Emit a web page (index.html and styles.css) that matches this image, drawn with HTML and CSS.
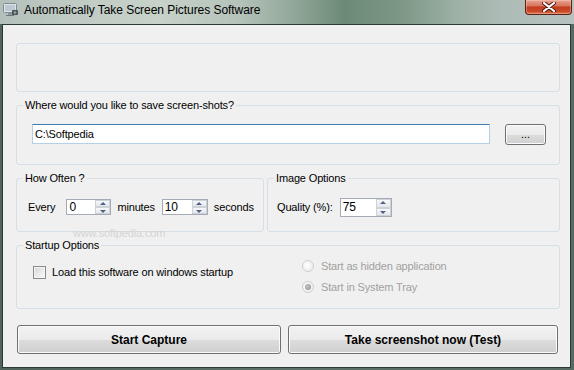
FILE: index.html
```html
<!DOCTYPE html>
<html lang="en">
  <head>
    <meta charset="UTF-8" />
    <title>Automatically Take Screen Pictures Software</title>
    <link rel="stylesheet" href="styles.css">
  </head>
  <body>
    <div class="window">
      <div class="titlebar">
        <svg class="app-icon" width="15" height="13" viewBox="0 0 15 13">
          <rect x="0.5" y="0.5" width="13" height="9" rx="1" fill="#dfe4e6" stroke="#7d8a8e" />
          <rect x="2" y="2" width="10" height="6" fill="#b9c8d2" />
          <rect x="5" y="10" width="4" height="2" fill="#8c979a" />
          <rect x="3" y="12" width="8" height="1" fill="#6f7a7d" />
          <rect x="9" y="7" width="6" height="5" rx="1" fill="#4b5457" />
          <circle cx="12" cy="9.5" r="1.3" fill="#9aa6ab" />
        </svg>
        <span class="title">Automatically Take Screen Pictures Software</span>
        <div class="close-btn">
          <svg width="14" height="10" viewBox="0 0 14 10">
            <path d="M2 1 L12 9 M12 1 L2 9" stroke="#4a1a10" stroke-width="4" stroke-linecap="round" />
            <path d="M2 1 L12 9 M12 1 L2 9" stroke="#ffffff" stroke-width="2.2" stroke-linecap="round" />
          </svg>
        </div>
      </div>

      <div class="client">
        <div class="group group-empty"></div>

        <div class="group group-path">
          <span class="legend">Where would you like to save screen-shots?</span>
          <div class="textbox">C:\Softpedia</div>
          <button class="btn btn-browse">...</button>
        </div>

        <div class="options-row">
          <div class="group group-often">
            <span class="legend">How Often ?</span>
            <span class="label">Every</span>
            <div class="spinner spin-minutes">
              <span class="spin-value">0</span>
              <div class="spin-buttons">
                <div class="spin-btn up"></div>
                <div class="spin-btn down"></div>
              </div>
            </div>
            <span class="label label-minutes">minutes</span>
            <div class="spinner spin-seconds">
              <span class="spin-value">10</span>
              <div class="spin-buttons">
                <div class="spin-btn up"></div>
                <div class="spin-btn down"></div>
              </div>
            </div>
            <span class="label label-seconds">seconds</span>
          </div>

          <div class="group group-image">
            <span class="legend">Image Options</span>
            <span class="label">Quality (%):</span>
            <div class="spinner spin-quality">
              <span class="spin-value">75</span>
              <div class="spin-buttons">
                <div class="spin-btn up"></div>
                <div class="spin-btn down"></div>
              </div>
            </div>
          </div>
        </div>

        <div class="group group-startup">
          <span class="legend">Startup Options</span>
          <div class="check-row">
            <span class="checkbox"></span>
            <span class="label">Load this software on windows startup</span>
          </div>
          <div class="radio-list">
            <div class="radio-row">
              <span class="radio"></span>
              <span class="label disabled">Start as hidden application</span>
            </div>
            <div class="radio-row">
              <span class="radio checked"></span>
              <span class="label disabled">Start in System Tray</span>
            </div>
          </div>
        </div>

        <div class="actions">
          <button class="btn btn-main btn-start">Start Capture</button>
          <button class="btn btn-main btn-test">Take screenshot now (Test)</button>
        </div>

        <span class="watermark">www.softpedia.com</span>
      </div>
    </div>
  </body>
</html>
```

FILE: styles.css
```css
body {
  margin: 0;
  overflow: hidden;
  font-family: "Liberation Sans", Arial, sans-serif;
  font-size: 11px;
  letter-spacing: -0.15px;
  color: #000;
}
.window {
  width: 574px;
  height: 370px;
  display: flex;
  flex-direction: column;
  background: linear-gradient(90deg, #4f645a 0%, #5d7268 50%, #566b62 100%);
}
.titlebar {
  height: 24px;
  display: flex;
  align-items: flex-start;
  flex-shrink: 0;
  background: linear-gradient(90deg, #b3bfba 0%, #bfcac4 12%, #c7d2c9 28%, #b4c2b9 42%, #8ea596 52%, #6b8a76 60%, #7d9886 70%, #9fb2a7 80%, #aebcb7 88%, #b6c2c0 100%);
}
.app-icon {
  margin: 3px 0 0 3px;
  flex-shrink: 0;
}
.title {
  margin: 3px 0 0 6px;
  font-size: 12px;
  letter-spacing: -0.05px;
  line-height: 15px;
  color: #000;
}
.close-btn {
  margin-left: auto;
  margin-right: 2px;
  width: 47px;
  height: 15px;
  box-sizing: border-box;
  border: 1px solid #5a2116;
  border-top: none;
  border-radius: 0 0 4px 4px;
  background: linear-gradient(#e9a594 0%, #d9755d 40%, #c13d20 52%, #c9492a 80%, #dc7a55 100%);
  box-shadow: inset 0 0 0 1px rgba(255, 220, 200, 0.35);
  display: flex;
  align-items: center;
  justify-content: center;
}
.client {
  position: relative;
  flex: 1;
  margin: 0 3px 2px 2px;
  border: 1px solid #2b3833;
  background-color: #f0f0f0;
  padding: 18px 10px 13px 13px;
  display: flex;
  flex-direction: column;
}
.group {
  position: relative;
  box-sizing: border-box;
  border: 1px solid #d5dfe5;
  border-radius: 3px;
}
.legend {
  position: absolute;
  top: -8px;
  left: 6px;
  padding: 0 2px;
  line-height: 14px;
  background-color: #f0f0f0;
}
.group-empty {
  height: 49px;
}
.group-path {
  margin-top: 13px;
  height: 60px;
  display: flex;
  align-items: flex-start;
  padding: 18px 0 0 15px;
}
.textbox {
  width: 458px;
  height: 20px;
  box-sizing: border-box;
  border: 1px solid #b5cfe7;
  border-top-color: #3d7bb1;
  background-color: #fff;
  padding: 0 2px;
  line-height: 18px;
}
.btn {
  font-family: "Liberation Sans", Arial, sans-serif;
  font-size: 11px;
  color: #000;
  border: 1px solid #707070;
  border-radius: 3px;
  background: linear-gradient(#f2f2f2 0%, #ebebeb 50%, #dddddd 50%, #cfcfcf 100%);
  box-shadow: inset 0 0 0 1px #fbfbfb;
  padding: 0;
  cursor: pointer;
}
.btn-browse {
  margin-left: 15px;
  width: 41px;
  height: 21px;
  line-height: 19px;
}
.options-row {
  margin-top: 13px;
  height: 54px;
  display: flex;
  gap: 3px;
}
.group-often {
  width: 248px;
  display: flex;
  align-items: flex-start;
  padding: 20px 0 0 11px;
}
.group-image {
  flex: 1;
  display: flex;
  align-items: flex-start;
  padding: 20px 0 0 9px;
}
.label {
  line-height: 16px;
  white-space: nowrap;
}
.label.disabled {
  color: #a0a0a0;
}
.spinner {
  display: flex;
  box-sizing: border-box;
  border: 1px solid #a5acb5;
  background-color: #fff;
}
.spin-minutes {
  width: 45px;
  height: 16px;
  margin: 0 6px 0 11px;
}
.label-minutes {
  margin-right: 7px;
}
.spin-seconds {
  width: 46px;
  height: 16px;
  margin-right: 6px;
}
.spin-quality {
  width: 52px;
  height: 19px;
  margin: -1px 0 0 7px;
}
.spin-value {
  flex: 1;
  padding-left: 2px;
  line-height: 14px;
  font-size: 12px;
}
.spin-quality .spin-value {
  line-height: 17px;
}
.spin-buttons {
  width: 15px;
  display: flex;
  flex-direction: column;
}
.spin-btn {
  flex: 1;
  position: relative;
  box-sizing: border-box;
  border: 1px solid #cdd2d9;
  background: linear-gradient(#f7f8f9, #e4e7eb);
}
.spin-btn::after {
  content: "";
  position: absolute;
  left: 50%;
  top: 50%;
  margin-left: -3px;
  border-left: 3px solid transparent;
  border-right: 3px solid transparent;
}
.spin-btn.up::after {
  margin-top: -2px;
  border-bottom: 3px solid #4e6288;
}
.spin-btn.down::after {
  margin-top: -1px;
  border-top: 3px solid #4e6288;
}
.group-startup {
  margin-top: 13px;
  height: 64px;
  display: flex;
  align-items: flex-start;
  padding-left: 16px;
}
.check-row {
  width: 269px;
  margin-top: 18px;
  display: flex;
  align-items: center;
  gap: 6px;
}
.checkbox {
  width: 13px;
  height: 13px;
  box-sizing: border-box;
  border: 1px solid #8a8a8a;
  background: linear-gradient(135deg, #d6d6d6, #fbfbfb);
  box-shadow: inset 0 0 0 1px #f4f4f4;
}
.radio-list {
  margin-top: 14px;
  display: flex;
  flex-direction: column;
  gap: 9px;
}
.radio-row {
  height: 12px;
  display: flex;
  align-items: center;
  gap: 7px;
}
.radio {
  width: 12px;
  height: 12px;
  box-sizing: border-box;
  border-radius: 50%;
  border: 1px solid #cfcfcf;
  background: radial-gradient(circle at 40% 40%, #ffffff, #e6e6e6);
  position: relative;
}
.radio.checked::after {
  content: "";
  position: absolute;
  left: 2px;
  top: 2px;
  width: 6px;
  height: 6px;
  border-radius: 50%;
  background: radial-gradient(circle at 40% 40%, #c4c4c4, #8d8d8d);
}
.actions {
  margin-top: 16px;
  display: flex;
  gap: 7px;
  padding-left: 1px;
}
.btn-main {
  height: 29px;
  font-size: 12px;
  font-weight: bold;
  letter-spacing: 0;
}
.btn-start {
  width: 264px;
}
.btn-test {
  width: 270px;
}
.watermark {
  position: absolute;
  left: 70px;
  top: 202px;
  font-size: 11px;
  color: #d4d4d4;
  pointer-events: none;
}
```
